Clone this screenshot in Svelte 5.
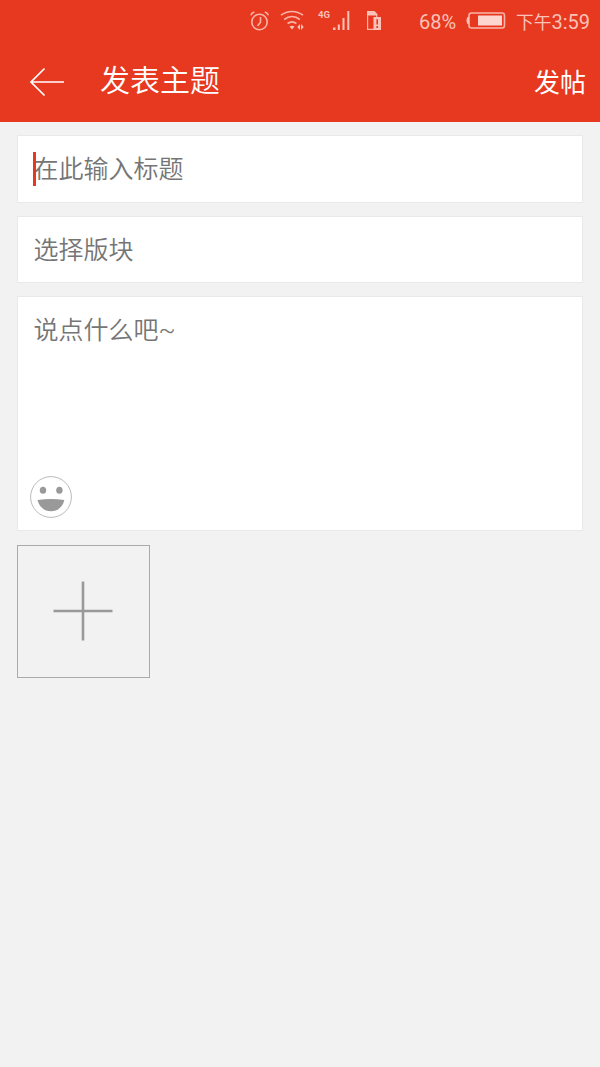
<script>
	const battery = 68;

	let title = $state("");
	let board = $state("");
	let content = $state("");
</script>

<div class="screen">
	<div class="status-bar">
		<svg class="alarm" width="20" height="22" viewBox="0 0 20 22">
			<circle cx="9.5" cy="12" r="7.7" />
			<path d="M10.5 7v5.3L7.5 16M.8 5.2C1.4 3.6 2.6 2.5 4.4 2M18.4 5.2C17.8 3.6 16.600 2.500 14.800 2" />
		</svg>
		<svg class="wifi" width="25" height="22" viewBox="0 0 25 22">
			<path d="M1 5.200C7.500 .3 16.500 .3 23 5.200M4.200 9.500C9 5.700 15 5.700 19.800 9.500M7.600 13.500C10.600 11.200 13.400 11.200 16.400 13.500" />
			<path class="solid" d="M9.500 16.500Q12 15 14.500 16.500L12 19.600zM17.300 17l2.700-3v6zM21 14l2.700 3-2.700 3z" />
		</svg>
		<span class="network">4G</span>
		<svg class="signal" width="17" height="22" viewBox="0 0 17 22">
			<path class="solid" d="M0 17.500h2.500V20H0zM4.800 14.500h2V20h-2zM9.500 8h2v12h-2zM14.300 1h2v19h-2z" />
		</svg>
		<svg class="sim" width="16" height="22" viewBox="0 0 16 22">
			<path class="thin" d="M8 19.400H1.600V5M10.700 4v3" />
			<path class="solid" d="M1 1h7.500l2.800 3v1.500H1zM7.500 7H15v13H7.500z" />
			<path class="cut" d="M11.200 9.200v5.300M11.200 16v2" />
		</svg>
		<span class="percent">{battery}%</span>
		<svg class="battery" width="40" height="18" viewBox="0 0 40 18">
			<rect x="3" y="1" width="35.500" height="15" rx="2.500" />
			<rect class="solid light" x="12" y="3.500" width="24" height="10" />
			<path class="solid" d="M3 5H1.500Q.5 6.500 .5 8.500t1 3.500H3z" />
		</svg>
		<span class="time"><span class="period">下午</span>3:59</span>
	</div>

	<header>
		<svg class="back" width="36" height="30" viewBox="0 0 36 30">
			<path d="M35 15H2M15.500 1.500L2 15l13.500 13.500" />
		</svg>
		<h1>发表主题</h1>
		<span class="submit">发帖</span>
	</header>

	<main>
		<div class="field">
			<i class="caret"></i>
			<span>{title || "在此输入标题"}</span>
		</div>
		<div class="field">
			<span>{board || "选择版块"}</span>
		</div>
		<div class="field editor">
			<span>{content || "说点什么吧~"}</span>
			<svg class="smile" width="42" height="42" viewBox="0 0 42 42">
				<circle cx="21" cy="21" r="20.400" />
				<ellipse class="ink" cx="13" cy="14.200" rx="3.200" ry="3.500" />
				<ellipse class="ink" cx="29.400" cy="14.200" rx="3.200" ry="3.500" />
				<path class="ink" d="M7.500 24Q21 22 34.300 24C33 31 27.500 35.300 21 35.300S9 31 7.500 24z" />
			</svg>
		</div>
		<div class="add">
			<svg width="61" height="61" viewBox="0 0 61 61">
				<path d="M30 .5v59M.5 30h59" />
			</svg>
		</div>
	</main>
</div>

<style>
	:global(body) {
		background: #f2f2f2;
	}
	.screen {
		height: 1067px;
		background: #f2f2f2;
		font-family: Roboto, "Noto Sans CJK SC", sans-serif;
		overflow: hidden;
	}
	svg {
		display: block;
		flex: none;
		fill: none;
	}
	.status-bar {
		box-sizing: border-box;
		display: flex;
		align-items: center;
		height: 42px;
		padding-left: 250px;
		background: #e73820;
		color: #fbc3b8;
		font-size: 20px;
		line-height: 24px;
		white-space: nowrap;
	}
	.status-bar svg {
		stroke: #fbb5a8;
		stroke-width: 1.6;
	}
	.status-bar .solid {
		fill: #fbc3b8;
		stroke: none;
	}
	.status-bar .light {
		fill: #fcd6cf;
	}
	.status-bar .thin {
		stroke-width: 1.2;
	}
	.wifi {
		margin-left: 10px;
	}
	.network {
		width: 15px;
		margin-left: 13px;
		margin-top: -12px;
		font-size: 9.5px;
		font-weight: 700;
		line-height: 10px;
	}
	.sim {
		margin-left: 16px;
	}
	.status-bar .cut {
		stroke: #e73820;
	}
	.percent {
		width: 37px;
		margin-top: 2px;
		margin-left: 37px;
	}
	.battery {
		margin-left: 10px;
	}
	.time {
		margin-top: 2px;
		margin-left: 10px;
	}
	.period {
		font-size: 17.7px;
	}
	header {
		box-sizing: border-box;
		display: flex;
		align-items: center;
		height: 80px;
		padding: 0 14px 0 29px;
		background: #e73820;
		color: #fff;
	}
	.back {
		stroke: #fff;
		stroke-width: 1.7;
	}
	h1 {
		flex: 1;
		margin: -2px 0 0 35px;
		font-size: 30px;
		font-weight: 350;
		line-height: 40px;
	}
	.submit {
		margin-top: 2px;
		font-size: 26px;
		line-height: 36px;
	}
	main {
		display: flex;
		flex-direction: column;
		gap: 13px;
		padding: 13px 17px 0;
	}
	.field {
		box-sizing: border-box;
		position: relative;
		height: 67.5px;
		padding: 16px 15.5px 0;
		border: 1px solid #e9e9e9;
		background: #fff;
		color: #757575;
		font-size: 25px;
		font-weight: 350;
		line-height: 36px;
	}
	.caret {
		position: absolute;
		left: 15px;
		top: 16px;
		width: 3px;
		height: 34px;
		background: #e73820;
	}
	.editor {
		display: flex;
		flex-direction: column;
		justify-content: space-between;
		height: 235px;
		padding-bottom: 12px;
	}
	.smile {
		margin-left: -3.5px;
		stroke: #bbb;
		stroke-width: 1;
	}
	.ink {
		fill: #999;
		stroke: none;
	}
	.add {
		box-sizing: border-box;
		display: flex;
		align-items: center;
		justify-content: center;
		width: 133px;
		height: 133px;
		margin-top: 1px;
		border: 1px solid #aaa;
	}
	.add svg {
		stroke: #999;
		stroke-width: 2.6;
	}
</style>
